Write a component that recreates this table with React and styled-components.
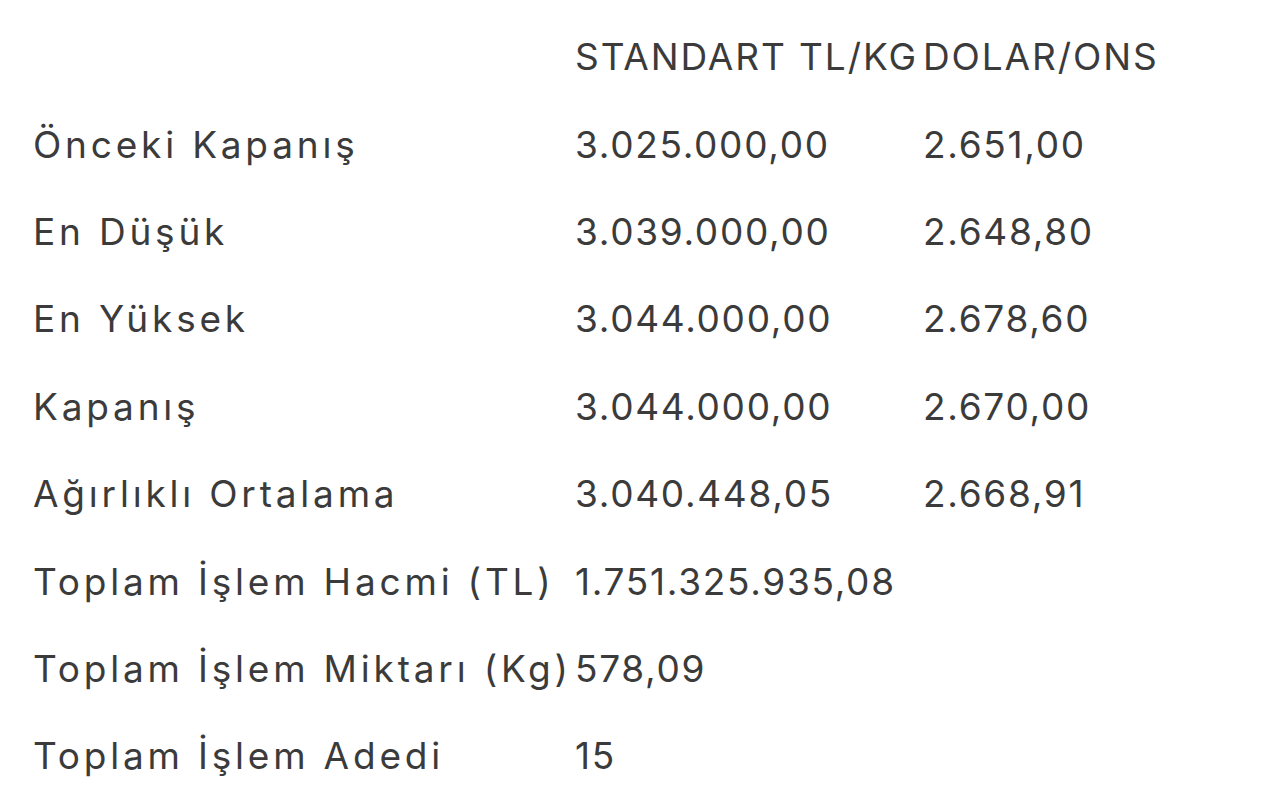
import React from "react";
import styled, { createGlobalStyle } from "styled-components";

const Global = createGlobalStyle`
  html, body { margin: 0; padding: 0; background: #ffffff; }
  body { font-family: Inter, "Noto Sans", sans-serif; }
`;

const Table = styled.div`
  display: grid;
  grid-template-columns: 542px 348px auto;
  padding: 13px 0 0 33px;
  color: #3b3b3b;
  font-family: Inter, "Noto Sans", sans-serif;
  font-size: 37px;
  font-weight: 400;
`;

const spacing = { head: "1.9px", label: "3.8px", num: "1.7px" };

const Cell = styled.div`
  height: 87.4px;
  display: flex;
  align-items: center;
  white-space: nowrap;
  letter-spacing: ${(p) => spacing[p.$kind]};
`;

const header = ["", "STANDART TL/KG", "DOLAR/ONS"];
const rows = [
  ["Önceki Kapanış", "3.025.000,00", "2.651,00"],
  ["En Düşük", "3.039.000,00", "2.648,80"],
  ["En Yüksek", "3.044.000,00", "2.678,60"],
  ["Kapanış", "3.044.000,00", "2.670,00"],
  ["Ağırlıklı Ortalama", "3.040.448,05", "2.668,91"],
  ["Toplam İşlem Hacmi (TL)", "1.751.325.935,08", ""],
  ["Toplam İşlem Miktarı (Kg)", "578,09", ""],
  ["Toplam İşlem Adedi", "15", ""],
];

export default function App() {
  return (
    <>
      <Global />
      <Table>
        {header.map((h, i) => (
          <Cell key={"h" + i} $kind="head">{h}</Cell>
        ))}
        {rows.map((r, ri) =>
          r.map((c, ci) => (
            <Cell key={ri + "-" + ci} $kind={ci === 0 ? "label" : "num"}>
              {c}
            </Cell>
          ))
        )}
      </Table>
    </>
  );
}
